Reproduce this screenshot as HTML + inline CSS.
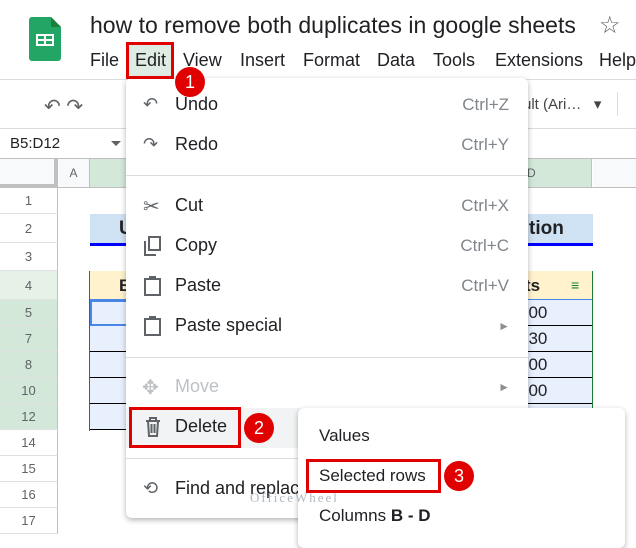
<!DOCTYPE html>
<html><head><style>
*{margin:0;padding:0;box-sizing:border-box}
body{width:636px;height:536px;overflow:hidden;background:#fff;font-family:"Liberation Sans",Arial,sans-serif;position:relative;color:#202124}
.a{position:absolute}
.rn{position:absolute;left:0;width:58px;text-align:center;font-size:13px;color:#5f6368;border-bottom:1px solid #e0e0e0;border-right:1px solid #c0c0c0}
.mi{position:absolute;left:175px;font-size:18px;color:#202124}
.sc{position:absolute;right:127px;font-size:17px;color:#80868b;text-align:right}
.badge{position:absolute;width:30px;height:30px;border-radius:50%;background:#e00000;color:#fff;font-size:18px;text-align:center;line-height:30px}
.red{position:absolute;border:3px solid #e00000}
.cell{position:absolute;left:89px;width:504px;border-bottom:1px solid #000;background:#e8f0fe;font-size:17px}
.m{position:absolute;top:50px;font-size:18px;white-space:nowrap}
</style></head><body>
<svg class="a" style="left:29px;top:17px" width="32" height="44" viewBox="0 0 32 44"><path d="M3 0h19l10 10v31a3 3 0 0 1-3 3H3a3 3 0 0 1-3-3V3a3 3 0 0 1 3-3z" fill="#23a566"/><path d="M22 0l10 10H22z" fill="#188038"/><rect x="7" y="17" width="18" height="12" fill="#fff"/><rect x="9" y="19" width="6" height="3" fill="#23a566"/><rect x="17" y="19" width="6" height="3" fill="#23a566"/><rect x="9" y="24" width="6" height="3" fill="#23a566"/><rect x="17" y="24" width="6" height="3" fill="#23a566"/></svg>
<div class="a" style="left:90px;top:12px;font-size:23px;white-space:nowrap">how to remove both duplicates in google sheets</div>
<div class="a" style="left:599px;top:11px;font-size:24px;color:#5f6368">☆</div>
<div class="a" style="left:128px;top:44px;width:44px;height:33px;background:#dfece3"></div>
<div class="m" style="left:90px">File</div>
<div class="m" style="left:135px">Edit</div>
<div class="m" style="left:183px">View</div>
<div class="m" style="left:240px">Insert</div>
<div class="m" style="left:303px">Format</div>
<div class="m" style="left:377px">Data</div>
<div class="m" style="left:433px">Tools</div>
<div class="m" style="left:495px">Extensions</div>
<div class="m" style="left:599px">Help</div>
<div class="a" style="left:0;top:79px;width:636px;height:1px;background:#dadce0"></div>
<div class="a" style="left:44px;top:94px;font-size:20px;color:#5f6368">↶ ↷</div>
<div class="a" style="left:523px;top:95px;font-size:15px;color:#444">ult (Ari…&nbsp;&nbsp;&nbsp;▾</div>
<div class="a" style="left:617px;top:92px;width:1px;height:24px;background:#dadce0"></div>
<div class="a" style="left:0;top:128px;width:636px;height:1px;background:#dadce0"></div>
<div class="a" style="left:10px;top:135px;font-size:15px">B5:D12</div>
<div class="a" style="left:111px;top:141px;border:5px solid transparent;border-top-color:#5f6368"></div>
<div class="a" style="left:0;top:158px;width:636px;height:1px;background:#c0c0c0"></div>
<div class="a" style="left:0;top:159px;width:58px;height:29px;background:#f8f9fa;border-right:4px solid #c0c0c0;border-bottom:4px solid #c0c0c0"></div>
<div class="a" style="left:58px;top:159px;width:32px;height:29px;background:#f8f9fa;border-right:1px solid #c0c0c0;text-align:center;font-size:12px;line-height:29px;color:#5f6368">A</div>
<div class="a" style="left:90px;top:159px;width:502px;height:29px;background:#d3e8d9;border-right:1px solid #c0c0c0;font-size:12px;line-height:29px;color:#5f6368"><span style="position:absolute;left:437px">D</span></div>
<div class="a" style="left:593px;top:159px;width:43px;height:29px;background:#f8f9fa"></div>
<div class="a" style="left:0;top:187px;width:636px;height:1px;background:#c0c0c0"></div>
<div class="rn" style="top:188px;height:26px;line-height:26px">1</div>
<div class="rn" style="top:214px;height:29px;line-height:29px">2</div>
<div class="rn" style="top:243px;height:28px;line-height:28px">3</div>
<div class="rn" style="top:271px;height:29px;line-height:29px;background:#e6f1e8">4</div>
<div class="rn" style="top:300px;height:26px;line-height:26px;background:#d3e8d9">5</div>
<div class="rn" style="top:326px;height:26px;line-height:26px;background:#d3e8d9">7</div>
<div class="rn" style="top:352px;height:26px;line-height:26px;background:#d3e8d9">8</div>
<div class="rn" style="top:378px;height:26px;line-height:26px;background:#d3e8d9">10</div>
<div class="rn" style="top:404px;height:26px;line-height:26px;background:#d3e8d9">12</div>
<div class="rn" style="top:430px;height:26px;line-height:26px">14</div>
<div class="rn" style="top:456px;height:26px;line-height:26px">15</div>
<div class="rn" style="top:482px;height:26px;line-height:26px">16</div>
<div class="rn" style="top:508px;height:26px;line-height:26px">17</div>
<div class="a" style="left:90px;top:214px;width:503px;height:30px;background:#cfe2f3;font-size:19px;font-weight:bold;line-height:30px"><span style="position:absolute;left:29px">U</span><span style="position:absolute;left:439px">tion</span></div>
<div class="a" style="left:90px;top:243px;width:503px;height:3px;background:#0000ff"></div>
<div class="a" style="left:89px;top:271px;width:504px;height:29px;background:#fff2cc;border-bottom:1px solid #4a86e8;font-size:17px;font-weight:bold;line-height:29px"><span style="position:absolute;left:30px">B</span><span style="position:absolute;left:436px">ts</span><span style="position:absolute;left:482px;color:#188038;font-weight:normal;font-size:14px">≡</span></div>
<div class="cell" style="top:300px;height:26px;line-height:26px"><span style="position:absolute;left:430px">000</span></div>
<div class="cell" style="top:326px;height:26px;line-height:26px"><span style="position:absolute;left:430px">330</span></div>
<div class="cell" style="top:352px;height:26px;line-height:26px"><span style="position:absolute;left:430px">000</span></div>
<div class="cell" style="top:378px;height:26px;line-height:26px"><span style="position:absolute;left:430px">000</span></div>
<div class="cell" style="top:404px;height:26px"></div>
<div class="a" style="left:89px;top:271px;width:1px;height:160px;background:#1e7b34"></div>
<div class="a" style="left:592px;top:271px;width:1px;height:160px;background:#1e7b34"></div>
<div class="a" style="left:90px;top:300px;width:40px;height:26px;border:2px solid #4a86e8"></div>
<div class="a" style="left:126px;top:78px;width:402px;height:440px;background:#fff;border-radius:6px;box-shadow:0 2px 6px rgba(0,0,0,.3)"></div>
<div class="a" style="left:126px;top:408px;width:402px;height:40px;background:#f1f3f4"></div>
<div class="a" style="left:126px;top:175px;width:402px;height:1px;background:#dadce0"></div>
<div class="a" style="left:126px;top:357px;width:402px;height:1px;background:#dadce0"></div>
<div class="a" style="left:126px;top:458px;width:402px;height:1px;background:#dadce0"></div>
<div class="a" style="left:143px;top:94px;font-size:18px;color:#5f6368">↶</div>
<div class="a" style="left:143px;top:134px;font-size:18px;color:#5f6368">↷</div>
<div class="a" style="left:143px;top:194px;font-size:20px;color:#5f6368">✂</div>
<svg class="a" style="left:144px;top:236px" width="18" height="20"><rect x="5" y="1" width="11" height="13" fill="none" stroke="#5f6368" stroke-width="2"/><path d="M1 5v14h11" fill="none" stroke="#5f6368" stroke-width="2"/></svg>
<svg class="a" style="left:144px;top:276px" width="18" height="20"><rect x="1" y="3" width="15" height="16" fill="none" stroke="#5f6368" stroke-width="2"/><rect x="5" y="0" width="7" height="4" fill="#5f6368"/></svg>
<svg class="a" style="left:144px;top:316px" width="18" height="20"><rect x="1" y="3" width="15" height="16" fill="none" stroke="#5f6368" stroke-width="2"/><rect x="5" y="0" width="7" height="4" fill="#5f6368"/></svg>
<div class="a" style="left:142px;top:375px;font-size:20px;color:#bdc1c6">✥</div>
<svg class="a" style="left:145px;top:417px" width="16" height="20"><path d="M1 4h14M5 4V1h6v3M3 4l1 15h8l1-15M6.5 7v9M9.5 7v9" fill="none" stroke="#5f6368" stroke-width="2"/></svg>
<div class="a" style="left:143px;top:478px;font-size:18px;color:#5f6368">⟲</div>
<div class="mi" style="top:94px">Undo</div><div class="sc" style="top:95px">Ctrl+Z</div>
<div class="mi" style="top:134px">Redo</div><div class="sc" style="top:135px">Ctrl+Y</div>
<div class="mi" style="top:195px">Cut</div><div class="sc" style="top:196px">Ctrl+X</div>
<div class="mi" style="top:235px">Copy</div><div class="sc" style="top:236px">Ctrl+C</div>
<div class="mi" style="top:275px">Paste</div><div class="sc" style="top:276px">Ctrl+V</div>
<div class="mi" style="top:315px">Paste special</div><div class="sc" style="top:319px;font-size:12px;color:#909090;right:126px">►</div>
<div class="mi" style="top:376px;color:#bdc1c6">Move</div><div class="sc" style="top:380px;font-size:12px;color:#909090;right:126px">►</div>
<div class="mi" style="top:416px">Delete</div>
<div class="mi" style="top:478px;white-space:nowrap">Find and replac</div>
<div class="a" style="left:298px;top:408px;width:327px;height:140px;background:#fff;border-radius:6px;box-shadow:0 2px 6px rgba(0,0,0,.3)"></div>
<div class="a" style="left:319px;top:426px;font-size:17px">Values</div>
<div class="a" style="left:319px;top:466px;font-size:17px">Selected rows</div>
<div class="a" style="left:319px;top:506px;font-size:17px">Columns <b>B - D</b></div>
<div class="a" style="left:250px;top:490px;font-size:13px;letter-spacing:2px;color:#b0b8c0;font-family:'Liberation Serif',serif">OfficeWheel</div>
<div class="red" style="left:126px;top:42px;width:48px;height:37px"></div>
<div class="badge" style="left:175px;top:67px">1</div>
<div class="red" style="left:129px;top:407px;width:112px;height:41px"></div>
<div class="badge" style="left:244px;top:413px">2</div>
<div class="red" style="left:306px;top:459px;width:135px;height:34px"></div>
<div class="badge" style="left:444px;top:461px">3</div>
</body></html>
